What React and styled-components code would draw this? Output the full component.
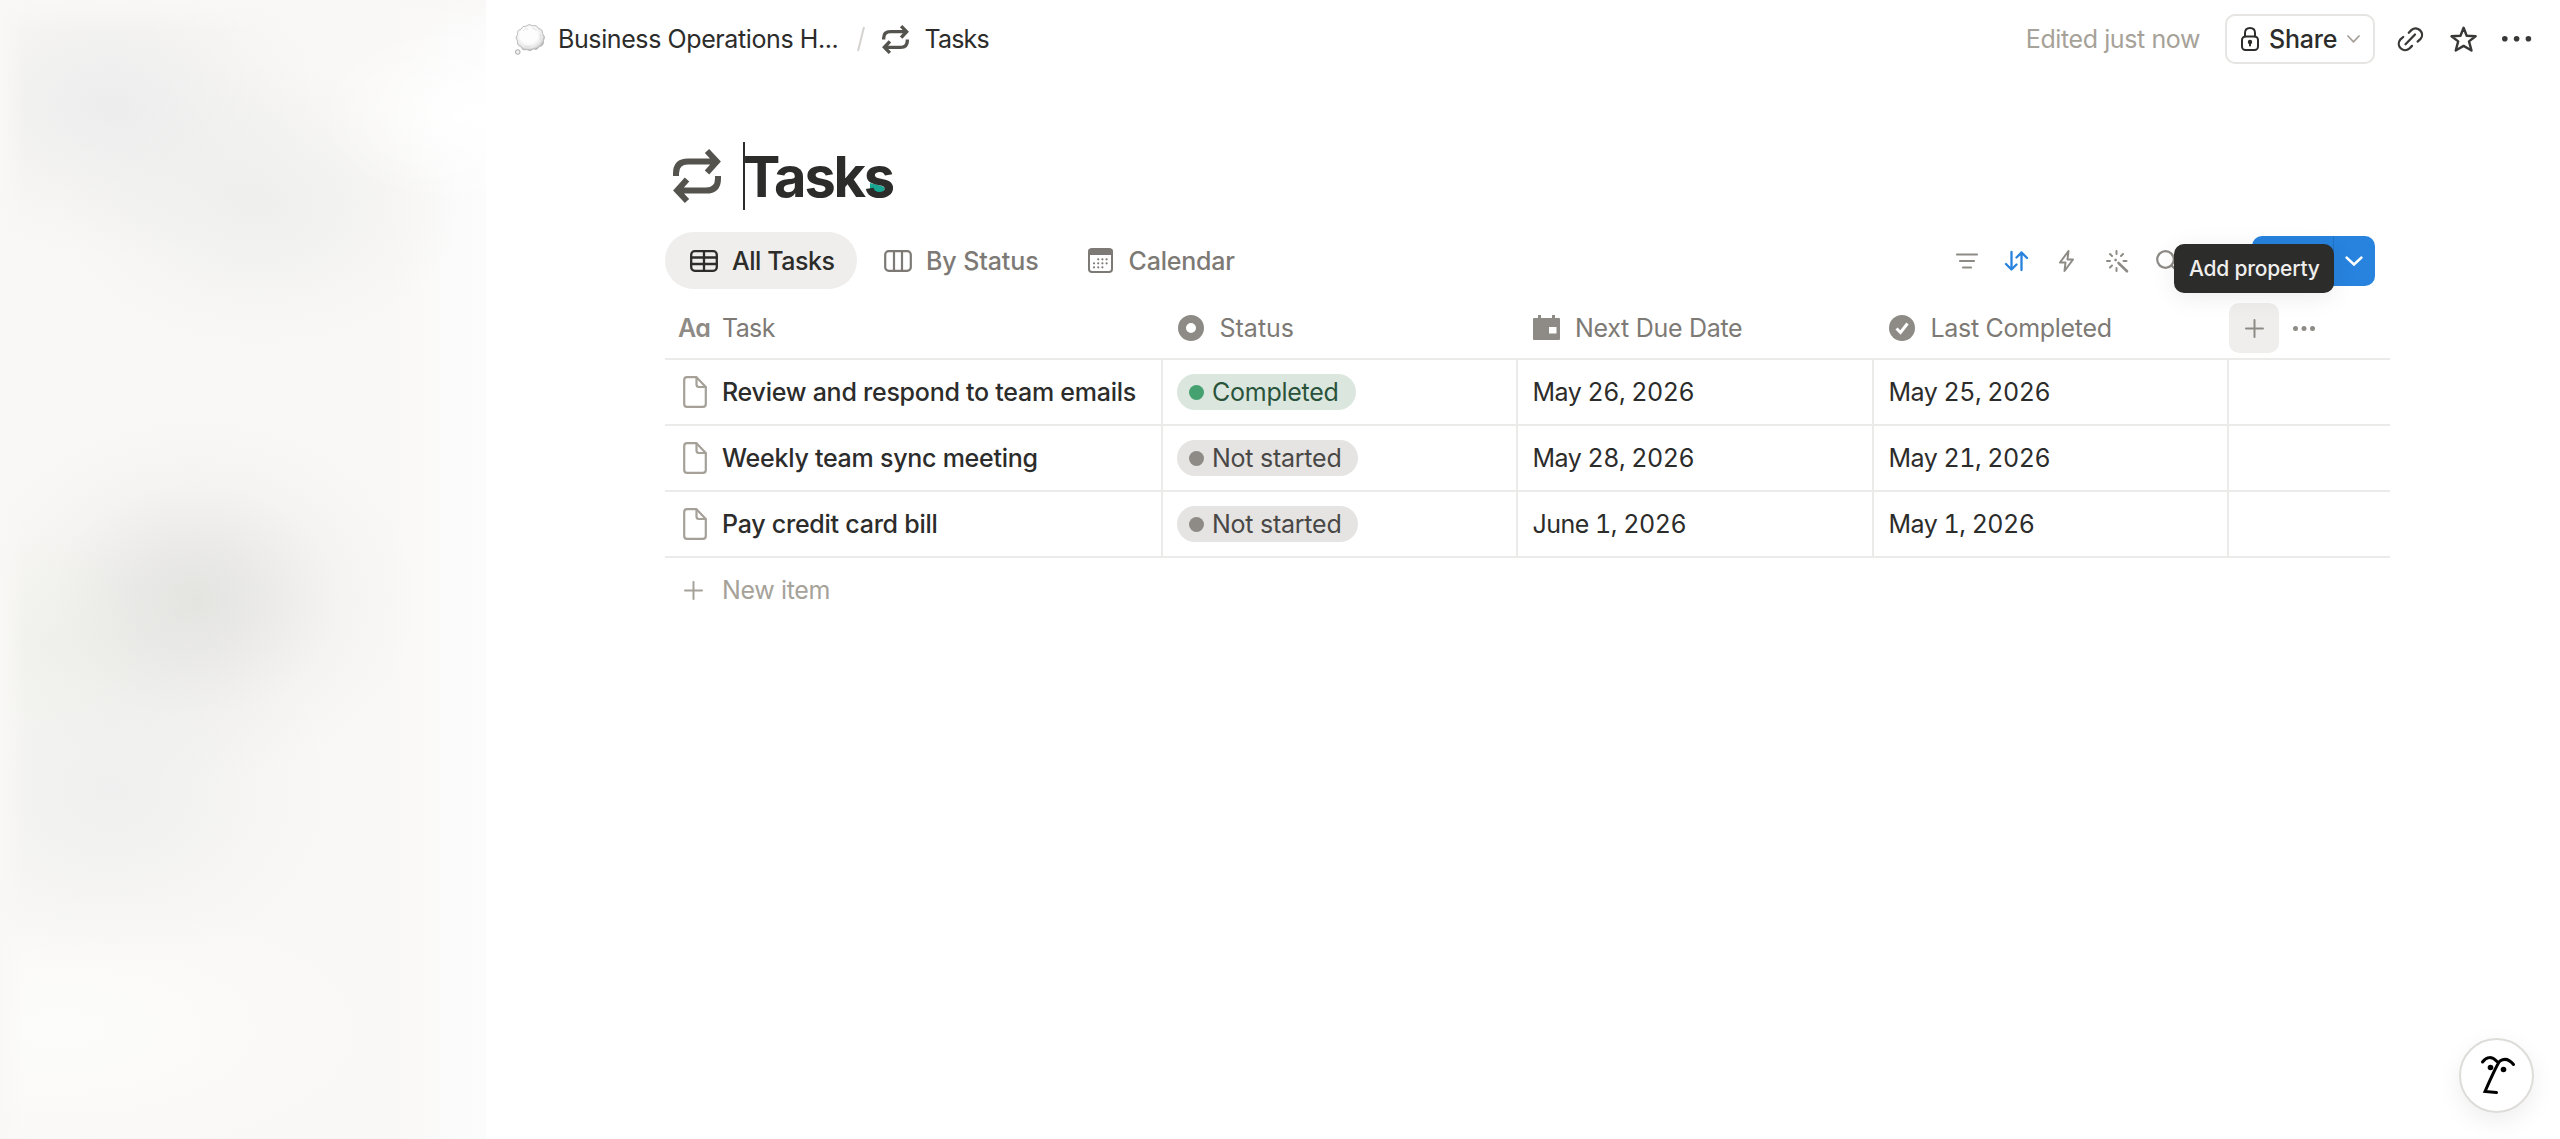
import React from "react";
import styled, { createGlobalStyle } from "styled-components";

const colors = {
  text: "#2c2c2b",
  icon: "#8e8b86",
  header: "#7d7a75",
  muted: "#a6a299",
  page: "#a5a199",
  line: "#ebebea",
  blue: "#2783de",
  hover: "#efeeec",
};

const GlobalStyle = createGlobalStyle`
  * {
    box-sizing: border-box;
  }
  body {
    margin: 0;
    background: #fff;
    color: ${colors.text};
    font-family: Inter, "Liberation Sans", sans-serif;
    font-size: 25px;
    line-height: 36px;
    overflow: hidden;
  }
  svg {
    display: block;
    flex: none;
    overflow: visible;
  }
`;

const Page = styled.div`
  display: flex;
  height: 1139px;
  width: 2560px;
`;

const Sidebar = styled.aside`
  flex: none;
  width: 486px;
  background:
    linear-gradient(#f9f8f6, rgba(249, 248, 246, 0) 30px),
    linear-gradient(90deg, #f9f8f6, rgba(249, 248, 246, 0) 24px),
    radial-gradient(150px 90px at 470px 115px, #fff, rgba(255, 255, 255, 0.5) 50%, rgba(255, 255, 255, 0)),
    radial-gradient(
      220px 180px at 195px 600px,
      rgba(224, 224, 221, 0.85),
      rgba(226, 226, 224, 0.65) 30%,
      rgba(230, 230, 228, 0.25) 65%,
      rgba(235, 235, 234, 0)
    ),
    radial-gradient(150px 120px at 50px 645px, rgba(238, 240, 232, 0.6), rgba(240, 242, 235, 0)),
    radial-gradient(220px 180px at 110px 790px, rgba(235, 236, 236, 0.7), rgba(240, 240, 240, 0)),
    radial-gradient(210px 150px at 110px 105px, rgba(234, 234, 235, 0.8), rgba(240, 240, 240, 0)),
    radial-gradient(200px 140px at 260px 205px, rgba(235, 236, 235, 0.75), rgba(240, 240, 240, 0)),
    radial-gradient(320px 140px at 60px 1030px, #fcfcfb, rgba(252, 252, 252, 0)),
    linear-gradient(90deg, #f9f8f6 390px, #fcfcfd);
`;

const Main = styled.main`
  flex: 1;
  display: flex;
  flex-direction: column;
`;

const TopBar = styled.header`
  display: flex;
  align-items: center;
  justify-content: space-between;
  height: 78px;
  padding: 0 18px 0 29px;
`;

const Group = styled.div`
  display: flex;
  align-items: center;
`;

const Text = styled.span`
  white-space: nowrap;
  color: ${(props) => props.$color || "inherit"};
  font-weight: ${(props) => props.$weight || 400};
  letter-spacing: ${(props) => props.$spacing || 0}px;
  margin-left: ${(props) => props.$left || 0}px;
`;

const DateText = styled(Text)`
  font-variant-numeric: tabular-nums;
  letter-spacing: -0.5px;
`;

// single-storey "a" for the title property mark
const PropertyMark = styled(Text)`
  font-feature-settings: "cv11";
  font-weight: 600;
  letter-spacing: -0.5px;
  color: ${colors.icon};
`;

const Slash = styled.svg`
  margin: 0 17px 0 19px;
`;

const ShareButton = styled.button`
  display: flex;
  align-items: center;
  width: 150px;
  height: 50px;
  margin: 0 10px 0 25px;
  padding: 0 0 0 14px;
  border: 2px solid #e6e5e3;
  border-radius: 10px;
  background: #fff;
  color: ${colors.text};
  font: inherit;
  font-weight: 500;
`;

const IconButton = styled.button`
  display: flex;
  align-items: center;
  justify-content: center;
  flex: none;
  width: 50px;
  height: 50px;
  margin: 0 ${(props) => props.$gap || 0}px 0 0;
  padding: 0;
  border: none;
  border-radius: 10px;
  background: ${(props) => (props.$active ? colors.hover : "none")};
  color: ${(props) => props.$color || colors.icon};
`;

const Content = styled.div`
  width: 1725px;
  margin: 64px 0 0 179px;
`;

const TitleRow = styled.div`
  display: flex;
  align-items: center;
  height: 68px;
  padding-left: 8px;
`;

const Title = styled.h1`
  position: relative;
  margin: 0 0 0 22px;
  border-left: 2px solid ${colors.text};
  height: 68px;
  font-size: 56px;
  font-weight: 700;
  line-height: 70px;
  letter-spacing: -2.2px;
  text-indent: -2px;
`;

const Mark = styled.svg`
  position: absolute;
  left: 125px;
  top: 41px;
  z-index: -1;
`;

const ViewBar = styled.div`
  display: flex;
  align-items: center;
  justify-content: space-between;
  height: 57px;
  margin-top: 22px;
  padding-right: 15px;
`;

const Tab = styled.div`
  display: flex;
  align-items: center;
  gap: ${(props) => props.$gap || 14}px;
  height: 57px;
  width: ${(props) => props.$width}px;
  padding-left: ${(props) => props.$pad}px;
  border-radius: 29px;
  background: ${(props) => (props.$active ? colors.hover : "none")};
  color: ${(props) => (props.$active ? colors.text : colors.header)};
`;

const NewButton = styled.div`
  display: flex;
  width: 123px;
  height: 50px;
  margin-left: 10px;
  border-radius: 10px;
  background: ${colors.blue};
  overflow: hidden;
`;

const NewLabel = styled.span`
  width: 82px;
  border-right: 1px solid #2171c4;
`;

const NewArrow = styled.span`
  flex: 1;
  display: flex;
  align-items: center;
  justify-content: center;
  padding-right: 2px;
`;

const Table = styled.div`
  margin-top: 9px;
`;

const Row = styled.div`
  display: grid;
  grid-template-columns: 498px 355px 356px 355px 1fr;
  height: ${(props) => props.$height}px;
  border-bottom: 2px solid ${colors.line};
`;

const Cell = styled.div`
  display: flex;
  align-items: center;
  padding-left: ${(props) => props.$pad ?? 15}px;
  border-right: ${(props) => (props.$plain ? 0 : 2)}px solid ${colors.line};
`;

const HeadCell = styled(Cell)`
  border-right: none;
  color: ${colors.header};
`;

const AddProperty = styled.div`
  position: relative;
`;

const Tooltip = styled.div`
  position: absolute;
  top: -59px;
  left: -55px;
  width: 160px;
  height: 49px;
  padding-left: 15px;
  border-radius: 10px;
  background: #2c2c2b;
  color: #f0efed;
  box-shadow: 0 4px 24px rgba(0, 0, 0, 0.08);
  font-size: 21px;
  line-height: 49px;
`;

const Pill = styled.span`
  display: flex;
  align-items: center;
  height: 36px;
  padding: 0 17px 0 12px;
  border-radius: 18px;
  background: ${(props) => (props.$done ? "#dbe7de" : "#e5e4e2")};
  color: ${(props) => (props.$done ? "#2a533c" : "#494846")};

  &::before {
    content: "";
    width: 15px;
    height: 15px;
    margin-right: 8px;
    border-radius: 50%;
    background: ${(props) => (props.$done ? "#46a171" : "#8e8b86")};
  }
`;

const NewItem = styled.div`
  display: flex;
  align-items: center;
  height: 64px;
  padding-left: 19px;
  color: ${colors.muted};
`;

const Assistant = styled.button`
  position: fixed;
  left: 2459px;
  top: 1038px;
  width: 75px;
  height: 75px;
  padding: 0;
  border: 2px solid #dddcd8;
  border-radius: 50%;
  background: #fff;
  box-shadow: 0 8px 24px rgba(0, 0, 0, 0.07);
`;

function Svg({ w, h, sw = 2, fill = "none", children }) {
  return (
    <svg
      width={w}
      height={h}
      viewBox={`0 0 ${w} ${h}`}
      fill={fill}
      stroke="currentColor"
      strokeWidth={sw}
      strokeLinecap="round"
      strokeLinejoin="round"
    >
      {children}
    </svg>
  );
}

function Repeat({ width, height }) {
  return (
    <svg
      width={width}
      height={height}
      viewBox="0 0 48 53.4"
      preserveAspectRatio="none"
      fill="none"
      stroke="#55534e"
      strokeWidth="6"
    >
      <path d="M3 26.7V24Q3 12.3 15 12.3H43M34 2L43.8 12.3 34 23.2" />
      <path d="M45 26.7V29.4Q45 41.1 33 41.1H5M14 51.4L4.2 41.1 14 30.2" />
    </svg>
  );
}

function Cloud() {
  return (
    <svg width="30" height="31" viewBox="0 0 30 31">
      <defs>
        <radialGradient id="puff" cx="45%" cy="42%" r="60%">
          <stop offset="0.5" stopColor="#fdfdfd" />
          <stop offset="0.8" stopColor="#e6e6e6" />
          <stop offset="1" stopColor="#adadad" />
        </radialGradient>
      </defs>
      <path
        fill="url(#puff)"
        stroke="#b0b0b0"
        strokeWidth="0.8"
        d="M11 2.2Q14-1 17.500 1.800Q22 .5 23.500 4.500Q28 5 27.500 9.500Q31 13 28.500 16.500Q29 22 24.500 22.500Q22.500 26.500 18.500 25Q15 28 11.500 25.500Q7 27 6 22.500Q1.500 21.500 2.500 17Q-.5 13.500 2.500 10.500Q1.500 6 6 5.200Q7.500 1.500 11 2.200Z"
      />
      <path
        d="M8 7Q10 4 13 5M17 4.500Q20 4 21.500 7M25 10Q26.500 13 25 16M10 22Q13 24 16 22"
        fill="none"
        stroke="#dcdcdc"
        strokeWidth="0.8"
      />
      <circle cx="2.800" cy="28" r="2.300" fill="#f0f0f0" stroke="#9f9f9f" strokeWidth="0.900" />
    </svg>
  );
}

function Dots({ r, step }) {
  return (
    <svg width={step * 2 + r * 2} height={r * 2} fill="currentColor">
      <circle cx={r} cy={r} r={r} />
      <circle cx={r + step} cy={r} r={r} />
      <circle cx={r + step * 2} cy={r} r={r} />
    </svg>
  );
}

function Plus() {
  return (
    <Svg w={19} h={19}>
      <path d="M9.500 1V18M1 9.500H18" />
    </Svg>
  );
}

function PageIcon() {
  return (
    <Svg w={24} h={32} sw={2.2}>
      <path d="M4 1.200H13.500L22.800 11V28Q22.800 30.800 20 30.800H4Q1.200 30.800 1.200 28V4Q1.200 1.200 4 1.200Z" />
      <path d="M13.500 1.500V8.500Q13.500 11 16 11H22.500" />
    </Svg>
  );
}

function CalendarIcon() {
  const dots = [
    [10.2, 11.3], [14.4, 11.3], [18.6, 11.3],
    [6, 15.3], [10.2, 15.3], [14.4, 15.3], [18.6, 15.3],
    [6, 19.3], [10.2, 19.3], [14.4, 19.3],
  ];
  return (
    <Svg w={25} h={25}>
      <rect x="1" y="1" width="23" height="23" rx="3" />
      <path d="M1.500 2H23.500V6H1.500Z" fill="currentColor" />
      {dots.map(([x, y]) => (
        <circle key={x + "-" + y} cx={x} cy={y} r="1.100" fill="currentColor" stroke="none" />
      ))}
    </Svg>
  );
}

const tasks = [
  { name: "Review and respond to team emails", done: true, next: "May 26, 2026", last: "May 25, 2026" },
  { name: "Weekly team sync meeting", done: false, next: "May 28, 2026", last: "May 21, 2026" },
  { name: "Pay credit card bill", done: false, next: "June 1, 2026", last: "May 1, 2026" },
];

export default function App() {
  return (
    <Page>
      <GlobalStyle />
      <Sidebar />
      <Main>
        <TopBar>
          <Group>
            <Cloud />
            <Text $left={13} $spacing={-0.4}>Business Operations H...</Text>
            <Slash width="8" height="26">
              <path d="M7 1L1 25" stroke="#d5d4d0" strokeWidth="2" />
            </Slash>
            <Repeat width="27" height="29" />
            <Text $left={15} $spacing={-0.8}>Tasks</Text>
          </Group>
          <Group>
            <Text $color={colors.muted} $spacing={-0.4}>Edited just now</Text>
            <ShareButton>
              <Svg w={18} h={24} sw={2}>
                <rect x="1" y="9.500" width="16" height="13.500" rx="3.500" />
                <path d="M4 9.500V6Q4 1 9 1T14 6V9.500" />
                <path d="M9 16V18.500" />
                <circle cx="9" cy="15" r="1.200" fill="currentColor" />
              </Svg>
              <Text $weight={500} $left={10} $spacing={-0.2}>Share</Text>
              <Text $left={10} $color={colors.muted}>
                <Svg w={13} h={8} sw={1.8}>
                  <path d="M1 1L6.500 6.800 12 1" />
                </Svg>
              </Text>
            </ShareButton>
            <IconButton $gap={3.5} $color="#383836">
              <Svg w={27} h={27} sw={2.3}>
                <path d="M8.500 18.200L18 8.500" />
                <path d="M11.800 6.700L14.600 3.900A6.400 6.400 0 0 1 23.600 12.900L20.600 15.600" />
                <path d="M15 19.900L12.200 22.700A6.400 6.400 0 0 1 3.200 13.700L6.200 11" />
              </Svg>
            </IconButton>
            <IconButton $gap={3.5} $color="#383836">
              <Svg w={27} h={26} sw={2.4}>
                <path d="M13.600 1.800L16.700 9.800 25.600 10.300 19 15.400 21.500 24.500 13.600 19.900 5.700 24.500 8.200 15.400 1.500 10.300 10.500 9.800Z" />
              </Svg>
            </IconButton>
            <IconButton $color="#383836">
              <Dots r={2.8} step={11.8} />
            </IconButton>
          </Group>
        </TopBar>

        <Content>
          <TitleRow>
            <Repeat width="48" height="54" />
            <Title>
              <Mark width="16" height="11">
                <path d="M0 0L12 3 15 5 13 9.500H8Q4.500 9.500 4 7H0Z" fill="#17a793" />
              </Mark>
              Tasks
            </Title>
          </TitleRow>

          <ViewBar>
            <Group>
              <Tab $active $width={192} $pad={25}>
                <Svg w={28} h={22} sw={2.3}>
                  <rect x="1.200" y="1.200" width="25.600" height="19.600" rx="3.500" />
                  <path d="M1.200 7.500H26.800M1.200 14H26.800M14 1.200V20.800" />
                </Svg>
                <Text $weight={500} $spacing={-0.45}>All Tasks</Text>
              </Tab>
              <Tab $width={205} $pad={27}>
                <Svg w={28} h={22} sw={2.2}>
                  <rect x="1.200" y="1.200" width="25.600" height="19.600" rx="3.500" />
                  <path d="M10 1.200V20.800M18 1.200V20.800" />
                </Svg>
                <Text $weight={500} $spacing={-0.1}>By Status</Text>
              </Tab>
              <Tab $width={200} $pad={26} $gap={15.5}>
                <CalendarIcon />
                <Text $weight={500} $spacing={-0.2}>Calendar</Text>
              </Tab>
            </Group>
            <Group>
              <IconButton>
                <Svg w={22} h={16} sw={2.2}>
                  <path d="M1 1.500H21M4 8H18M7 14.500H15" />
                </Svg>
              </IconButton>
              <IconButton $color={colors.blue}>
                <Svg w={24} h={20} sw={2.3}>
                  <path d="M6.500 1V18.500M1 13L6.500 18.500 11.500 13.500" />
                  <path d="M16.500 19V1.500M11.500 6.500L16.500 1.500 22 7" />
                </Svg>
              </IconButton>
              <IconButton>
                <Svg w={16} h={22}>
                  <path d="M9.500 1L1 12.500H6.500L5.500 21 14 9.500H8.500Z" />
                </Svg>
              </IconButton>
              <IconButton>
                <Svg w={22} h={22}>
                  <path d="M10.500 1V4M4 4L6 6M17 4L15 6M1 11H4M17.500 11H20.500M10.500 18V21M4 17.500L6 15.500" />
                  <path d="M9.500 9.800L9.700 10M12.500 13L21 21.300" strokeWidth="2.600" />
                </Svg>
              </IconButton>
              <IconButton>
                <Svg w={22} h={22} sw={2.2}>
                  <circle cx="9.500" cy="9.500" r="8.300" />
                  <path d="M15.500 15.500L21 21" />
                </Svg>
              </IconButton>
              <IconButton />
              <NewButton>
                <NewLabel />
                <NewArrow>
                  <svg width="18" height="10" fill="none" stroke="#fff" strokeWidth="2.4" strokeLinecap="round">
                    <path d="M1.500 1.500L9 8.500 16.500 1.500" />
                  </svg>
                </NewArrow>
              </NewButton>
            </Group>
          </ViewBar>

          <Table>
            <Row $height={62}>
              <HeadCell $pad={13}>
                <PropertyMark>Aa</PropertyMark>
                <Text $left={11.5} $spacing={-0.6}>Task</Text>
              </HeadCell>
              <HeadCell>
                <svg width="26" height="26">
                  <circle cx="13" cy="13" r="9" fill="none" stroke={colors.icon} strokeWidth="8" />
                </svg>
                <Text $left={15.5}>Status</Text>
              </HeadCell>
              <HeadCell>
                <svg width="27" height="26" fill={colors.icon}>
                  <path
                    fillRule="evenodd"
                    d="M1 3H5V0H8V3H19V0H22V3H26Q27 3 27 4V24Q27 25 26 25H1Q0 25 0 24V4Q0 3 1 3ZM16 12V18.500H23.500V12Z"
                  />
                </svg>
                <Text $left={15} $spacing={-0.3}>Next Due Date</Text>
              </HeadCell>
              <HeadCell>
                <svg width="26" height="26">
                  <circle cx="13" cy="13" r="13" fill={colors.icon} />
                  <path d="M7.500 13.500L11.500 17.500 18.500 8.500" fill="none" stroke="#fff" strokeWidth="3" />
                </svg>
                <Text $left={15.5} $spacing={-0.3}>Last Completed</Text>
              </HeadCell>
              <HeadCell $pad={0}>
                <AddProperty>
                  <IconButton $active>
                    <Plus />
                  </IconButton>
                  <Tooltip>
                    <Text $weight={500} $spacing={-0.2}>Add property</Text>
                  </Tooltip>
                </AddProperty>
                <IconButton>
                  <Dots r={2.5} step={8.5} />
                </IconButton>
              </HeadCell>
            </Row>
            {tasks.map((task) => (
              <Row key={task.name} $height={66}>
                <Cell $pad={18}>
                  <Text $color={colors.page}>
                    <PageIcon />
                  </Text>
                  <Text $weight={500} $left={15} $spacing={-0.25}>{task.name}</Text>
                </Cell>
                <Cell $pad={14}>
                  <Pill $done={task.done}>
                    <Text $spacing={-0.25}>{task.done ? "Completed" : "Not started"}</Text>
                  </Pill>
                </Cell>
                <Cell $pad={14.5}>
                  <DateText>{task.next}</DateText>
                </Cell>
                <Cell $pad={14.5}>
                  <DateText>{task.last}</DateText>
                </Cell>
                <Cell $plain />
              </Row>
            ))}
            <NewItem>
              <Plus />
              <Text $left={19} $spacing={-0.35}>New item</Text>
            </NewItem>
          </Table>
        </Content>
      </Main>
      <Assistant aria-label="Assistant">
        <svg width="71" height="71" fill="none" stroke="#000" strokeWidth="3" strokeLinecap="round">
          <path d="M21.500 22Q28 13.500 36 21.500" />
          <path d="M52.500 24.500Q46 16.500 39 21Q36.500 23 24 51.500L35.500 52.500" strokeLinejoin="miter" />
          <circle cx="29.500" cy="27.500" r="2.800" fill="#000" stroke="none" />
          <circle cx="42.500" cy="29.500" r="2.800" fill="#000" stroke="none" />
        </svg>
      </Assistant>
    </Page>
  );
}
